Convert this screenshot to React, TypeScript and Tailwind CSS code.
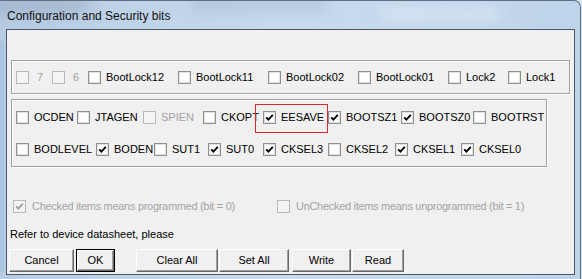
import clsx from 'clsx'

type Item = { label: string; w: string; checked?: boolean; disabled?: boolean; gap?: string }

const lockRow: Item[] = [
  { label: '7', w: 'w-[36px]', disabled: true, gap: 'ml-[8px]' },
  { label: '6', w: 'w-[36px]', disabled: true, gap: 'ml-[8px]' },
  { label: 'BootLock12', w: 'w-[90px]' },
  { label: 'BootLock11', w: 'w-[90px]' },
  { label: 'BootLock02', w: 'w-[90px]' },
  { label: 'BootLock01', w: 'w-[90px]' },
  { label: 'Lock2', w: 'w-[60px]' },
  { label: 'Lock1', w: 'w-[60px]' },
]

const fuseHigh: Item[] = [
  { label: 'OCDEN', w: 'w-[61px]' },
  { label: 'JTAGEN', w: 'w-[66px]' },
  { label: 'SPIEN', w: 'w-[60px]', disabled: true },
  { label: 'CKOPT', w: 'w-[60px]' },
  { label: 'EESAVE', w: 'w-[65px]', checked: true },
  { label: 'BOOTSZ1', w: 'w-[73px]', checked: true },
  { label: 'BOOTSZ0', w: 'w-[72px]', checked: true },
  { label: 'BOOTRST', w: 'w-[70px]' },
]

const fuseLow: Item[] = [
  { label: 'BODLEVEL', w: 'w-[80px]' },
  { label: 'BODEN', w: 'w-[58px]', checked: true },
  { label: 'SUT1', w: 'w-[54px]' },
  { label: 'SUT0', w: 'w-[55px]', checked: true },
  { label: 'CKSEL3', w: 'w-[65px]', checked: true },
  { label: 'CKSEL2', w: 'w-[67px]' },
  { label: 'CKSEL1', w: 'w-[66px]', checked: true },
  { label: 'CKSEL0', w: 'w-[70px]', checked: true },
]

function CheckBox({ checked, disabled }: { checked?: boolean; disabled?: boolean }) {
  return (
    <span
      className={clsx(
        'flex h-[13px] w-[13px] shrink-0 items-center justify-center border',
        disabled
          ? 'border-[#b8b8b8] bg-[#f4f4f4]'
          : 'border-[#8e8f8f] bg-white shadow-[inset_0_0_0_1px_#e2e2e2]'
      )}
    >
      {checked && (
        <svg width="9" height="9" viewBox="0 0 9 9">
          <path
            d="M1.2 4.3 L3.4 6.6 L7.8 1.8"
            fill="none"
            stroke={disabled ? '#a0a0a0' : '#000'}
            strokeWidth="1.9"
          />
        </svg>
      )}
    </span>
  )
}

function Check({ item }: { item: Item }) {
  return (
    <div className={clsx('flex h-[13px] shrink-0 items-center', item.w)}>
      <CheckBox checked={item.checked} disabled={item.disabled} />
      <span
        className={clsx(
          'whitespace-nowrap leading-none',
          item.gap ?? 'ml-[5px]',
          item.disabled ? 'text-[#a3a3a3]' : 'text-black'
        )}
      >
        {item.label}
      </span>
    </div>
  )
}

function Btn({ label, w, isDefault }: { label: string; w: string; isDefault?: boolean }) {
  const face = (
    <div className="flex h-full w-full items-center justify-center border border-t-white border-l-white border-r-[#696969] border-b-[#696969] bg-[#f0f0f0] shadow-[inset_-1px_-1px_0_#a0a0a0]">
      {label}
    </div>
  )
  if (isDefault) {
    return <div className={clsx('h-[23px] shrink-0 border border-black', w)}>{face}</div>
  }
  return <div className={clsx('h-[23px] shrink-0', w)}>{face}</div>
}

export default function App() {
  return (
    <div className="relative h-[279px] w-[582px] overflow-hidden bg-[#d9e6f2] font-['Liberation_Sans',Arial,sans-serif] text-[11px] text-black">
      {/* aero glass frame */}
      <div className="relative h-[279px] w-[581px] overflow-hidden rounded-tr-[7px] border-r border-t border-[#5d6f82] bg-gradient-to-r from-[#b7cde4] via-[#c9dbee] to-[#bed4ea]">
        <div className="absolute left-[-20px] top-[-8px] h-[22px] w-[110px] rounded-full bg-[#8fa3b8] opacity-50 blur-[8px]" />
        <div className="absolute left-[190px] top-[-6px] h-[16px] w-[140px] rounded-full bg-[#9fb3c8] opacity-50 blur-[8px]" />
        <div className="absolute left-[380px] top-[6px] h-[14px] w-[120px] rounded-full bg-[#dbe7f3] opacity-70 blur-[6px]" />
        <div className="absolute left-[0px] top-[40px] h-[230px] w-[4px] bg-[#a9c5e3]" />

        <div className="relative flex h-[28px] items-center pl-[7px] pt-[1px] text-[12px] text-[#111]">
          Configuration and Security bits
        </div>

        {/* client area */}
        <div className="relative ml-[6px] flex h-[246px] w-[569px] flex-col border border-[#4b5765] bg-[#f0f0f0]">
          <div className="ml-[4px] mt-[30px] flex h-[34px] w-[559px] items-start border border-[#a0a0a0] pl-[4px] pt-[10px] shadow-[inset_1px_1px_0_#fff,1px_1px_0_#fff]">
            {lockRow.map((it) => (
              <Check key={it.label} item={it} />
            ))}
          </div>

          <div className="ml-[4px] mt-[5px] flex h-[68px] w-[536px] flex-col gap-[19px] border border-[#a0a0a0] pl-[4px] pt-[11px] shadow-[inset_1px_1px_0_#fff,1px_1px_0_#fff]">
            <div className="flex">
              {fuseHigh.map((it) => (
                <Check key={it.label} item={it} />
              ))}
            </div>
            <div className="flex">
              {fuseLow.map((it) => (
                <Check key={it.label} item={it} />
              ))}
            </div>
          </div>

          {/* red highlight around EESAVE */}
          <div className="absolute left-[248px] top-[74px] h-[29px] w-[73px] border border-[#e0262e]" />

          <div className="ml-[6px] mt-[33px] flex h-[13px] items-center text-[#a3a3a3]">
            <div className="flex w-[264px] items-center">
              <CheckBox checked disabled />
              <span className="ml-[6px] whitespace-nowrap leading-none tracking-[-0.3px]">Checked items means programmed (bit = 0)</span>
            </div>
            <div className="flex items-center">
              <CheckBox disabled />
              <span className="ml-[6px] whitespace-nowrap leading-none tracking-[-0.3px]">UnChecked items means unprogrammed (bit = 1)</span>
            </div>
          </div>

          <div className="ml-[3px] mt-[15px] h-[13px] leading-[13px]">Refer to device datasheet, please</div>

          <div className="ml-[2px] mt-[8px] flex">
            <Btn label="Cancel" w="w-[65px]" />
            <div className="w-[2px]" />
            <Btn label="OK" w="w-[39px]" isDefault />
            <div className="w-[21px]" />
            <Btn label="Clear All" w="w-[82px]" />
            <div className="w-[1px]" />
            <Btn label="Set All" w="w-[70px]" />
            <div className="w-[3px]" />
            <Btn label="Write" w="w-[59px]" />
            <div className="w-[1px]" />
            <Btn label="Read" w="w-[52px]" />
          </div>
        </div>
      </div>
    </div>
  )
}
